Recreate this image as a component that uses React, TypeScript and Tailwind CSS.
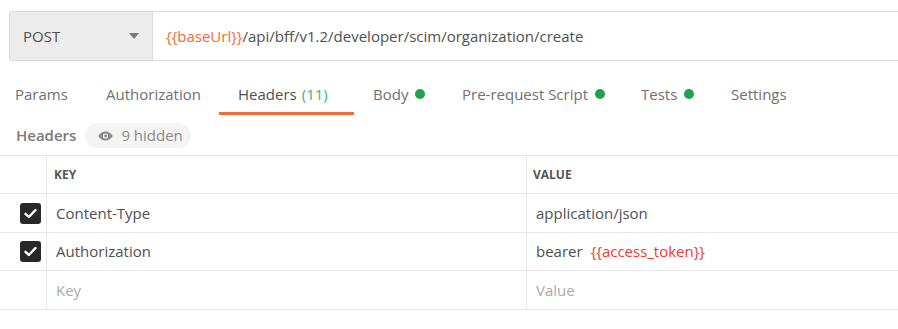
import React from "react";

const font = { fontFamily: '"Open Sans", "Noto Sans", sans-serif' };

function Dot() {
  return <span className="ml-[7px] inline-block h-[10px] w-[10px] rounded-full bg-[#1fa34a]" />;
}

function Check() {
  return (
    <div className="flex h-[21px] w-[21px] items-center justify-center rounded-[3px] bg-[#282828]">
      <svg width="13" height="11" viewBox="0 0 13 11">
        <path d="M1.5 5.8 L4.8 9 L11.5 2" fill="none" stroke="#ffffff" strokeWidth="2.4" strokeLinecap="round" strokeLinejoin="round" />
      </svg>
    </div>
  );
}

export default function App() {
  return (
    <div className="h-[329px] w-[898px] overflow-hidden bg-white" style={font}>
      {/* URL bar */}
      <div className="flex pl-[9px] pt-[11px]">
        <div className="flex h-[50px] w-[144px] items-center justify-between rounded-l-[3px] border border-[#d9d9d9] bg-[#ececec] pl-[13px] pr-[13px]">
          <span className="text-[15px] text-[#505050]">POST</span>
          <svg width="10" height="6" viewBox="0 0 10 6">
            <path d="M0 0 L10 0 L5 6 Z" fill="#7a7a7a" />
          </svg>
        </div>
        <div className="flex h-[50px] flex-1 items-center border-y border-[#d9d9d9] pl-[13px] text-[15px] text-[#505050]">
          <span className="text-[#f26b3a]">{"{{baseUrl}}"}</span>
          <span>/api/bff/v1.2/developer/scim/organization/create</span>
        </div>
      </div>

      {/* Tabs */}
      <div className="mt-[22px] flex h-[32px] text-[15px] text-[#707070]">
        <div className="w-[106px] pl-[15px]">Params</div>
        <div className="w-[113px]">Authorization</div>
        <div className="flex h-[32px] w-[135px] items-start border-b-[3px] border-[#f26b3a] pl-[19px] text-[#505050]">
          Headers <span className="ml-[5px] text-[#3db56a]">(11)</span>
        </div>
        <div className="flex h-[22px] w-[108px] items-center pl-[19px]">
          <span>Body</span>
          <Dot />
        </div>
        <div className="flex h-[22px] w-[179px] items-center">
          <span>Pre-request Script</span>
          <Dot />
        </div>
        <div className="flex h-[22px] w-[90px] items-center">
          <span>Tests</span>
          <Dot />
        </div>
        <div>Settings</div>
      </div>

      {/* Headers label */}
      <div className="mt-[8px] flex items-center pl-[16px]">
        <span className="text-[15px] font-semibold text-[#7a7a7a]">Headers</span>
        <div className="ml-[9px] flex h-[25px] w-[106px] items-center rounded-full bg-[#f4f4f4] pl-[13px] text-[15px] text-[#8a8a8a]">
          <svg width="15" height="10" viewBox="0 0 15 10">
            <path d="M7.5 0.5 C3.8 0.5 1.3 3.2 0.5 5 C1.3 6.8 3.8 9.5 7.5 9.5 C11.2 9.5 13.7 6.8 14.5 5 C13.7 3.2 11.2 0.5 7.5 0.5 Z" fill="#8a8a8a" />
            <circle cx="7.5" cy="5" r="2.6" fill="#f4f4f4" />
            <circle cx="7.5" cy="5" r="1.4" fill="#8a8a8a" />
          </svg>
          <span className="ml-[8px]">9 hidden</span>
        </div>
      </div>

      {/* Table */}
      <div className="mt-[7px] border-t border-[#e6e6e6] text-[15px]">
        <div className="grid h-[38px] grid-cols-[46px_480px_1fr] border-b border-[#e6e6e6]">
          <div />
          <div className="flex items-center border-l border-[#e6e6e6] pl-[7px] text-[12px] font-bold text-[#555555]">KEY</div>
          <div className="flex items-center border-l border-[#e6e6e6] pl-[6px] text-[12px] font-bold text-[#555555]">VALUE</div>
        </div>
        <div className="grid h-[39px] grid-cols-[46px_480px_1fr] border-b border-[#e6e6e6]">
          <div className="flex items-center pl-[20px]"><Check /></div>
          <div className="flex items-center border-l border-[#e6e6e6] pl-[9px] text-[#505050]">Content-Type</div>
          <div className="flex items-center border-l border-[#e6e6e6] pl-[9px] text-[#505050]">application/json</div>
        </div>
        <div className="grid h-[38px] grid-cols-[46px_480px_1fr] border-b border-[#e6e6e6]">
          <div className="flex items-center pl-[20px]"><Check /></div>
          <div className="flex items-center border-l border-[#e6e6e6] pl-[9px] text-[#505050]">Authorization</div>
          <div className="flex items-center border-l border-[#e6e6e6] pl-[9px] text-[#505050]">
            bearer<span className="ml-[8px] text-[#f03a2e]">{"{{access_token}}"}</span>
          </div>
        </div>
        <div className="grid h-[39px] grid-cols-[46px_480px_1fr] border-b border-[#e6e6e6]">
          <div />
          <div className="flex items-center border-l border-[#e6e6e6] pl-[9px] text-[#aaaaaa]">Key</div>
          <div className="flex items-center border-l border-[#e6e6e6] pl-[9px] text-[#aaaaaa]">Value</div>
        </div>
      </div>
    </div>
  );
}
